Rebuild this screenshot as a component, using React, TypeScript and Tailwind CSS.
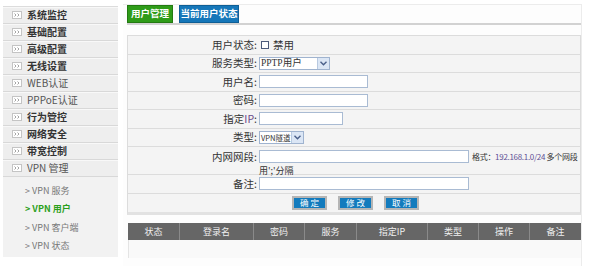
import React from "react";

const menu = [
  { t: "系统监控" },
  { t: "基础配置" },
  { t: "高级配置" },
  { t: "无线设置" },
  { t: "WEB认证", latin: true },
  { t: "PPPoE认证", latin: true },
  { t: "行为管控" },
  { t: "网络安全" },
  { t: "带宽控制" },
  { t: "VPN 管理", latin: true },
];

const sub = [
  { t: "VPN 服务" },
  { t: "VPN 用户", active: true },
  { t: "VPN 客户端" },
  { t: "VPN 状态" },
];

const cols = [
  { t: "状态", w: "w-[51px]" },
  { t: "登录名", w: "w-[74px]" },
  { t: "密码", w: "w-[51px]" },
  { t: "服务", w: "w-[52px]" },
  { t: "指定IP", w: "w-[71px]" },
  { t: "类型", w: "w-[51px]" },
  { t: "操作", w: "w-[51px]" },
  { t: "备注", w: "flex-1" },
];

function Arrow() {
  return (
    <span className="w-[12px] h-full shrink-0 bg-[#dbe6f5] border-l border-[#b8c9e0] flex items-center justify-center">
      <svg width="7" height="5" viewBox="0 0 7 5">
        <path d="M0.5 0.8 L3.5 3.8 L6.5 0.8" stroke="#4a5f8a" strokeWidth="1.4" fill="none" />
      </svg>
    </span>
  );
}

function Icon() {
  return (
    <span className="ml-[9px] w-[10px] h-[8px] shrink-0 border border-[#c4c4c4] bg-white flex items-center justify-center">
      <svg width="6" height="4" viewBox="0 0 6 4">
        <path d="M0.5 0.5 L2 2 L0.5 3.5 M3.5 0.5 L5 2 L3.5 3.5" stroke="#9a9a9a" strokeWidth="0.9" fill="none" />
      </svg>
    </span>
  );
}

function Row({ label, children }: { label: React.ReactNode; children?: React.ReactNode }) {
  return (
    <div className="flex items-center border-b border-[#dcdcdc] h-[18.5px]">
      <div className="w-[129px] shrink-0 text-right text-[10.5px] text-[#333] leading-none whitespace-nowrap">{label}</div>
      <div className="pl-[2px] flex items-center flex-1">{children}</div>
    </div>
  );
}

const inputCls = "shrink-0 h-[13px] border border-[#a9bbd3] bg-white outline-none";

export default function App() {
  return (
    <div
      className="w-[591px] h-[266px] bg-white flex overflow-hidden"
      style={{ fontFamily: '"Noto Sans CJK SC", "Noto Sans", sans-serif' }}
    >
      {/* Sidebar */}
      <div className="w-[115px] shrink-0 ml-[3px] mt-[6px] flex flex-col">
        <div className="bg-[#eeeeee] border-t border-[#dcdcdc]">
          {menu.map((m) => (
            <div key={m.t} className="h-[17px] flex items-center border-b border-[#d8d8d8] shadow-[inset_0_1px_0_#f8f8f8]">
              <Icon />
              <span
                className={`ml-[5px] text-[10px] leading-none whitespace-nowrap ${m.latin ? "text-[#555]" : "text-[#333] font-bold"}`}
              >
                {m.t}
              </span>
            </div>
          ))}
        </div>
        <div className="bg-[#f2f2f2] h-[80px] pt-[4px]">
          {sub.map((s) => (
            <div key={s.t} className="h-[18.5px] flex items-center pl-[22px]">
              <span
                className={`text-[9px] leading-none whitespace-nowrap ${s.active ? "text-[#2ca01c] font-bold" : "text-[#777]"}`}
              >
                &gt; {s.t}
              </span>
            </div>
          ))}
        </div>
      </div>

      {/* Main */}
      <div className="ml-[5px] w-[459px] shrink-0 mt-[4px] border-t border-r border-[#ececec] bg-[#fdfdfd] pl-[4px] flex flex-col">
        <div className="flex items-end h-[18px] gap-[6px]">
          <div className="h-[18px] w-[46px] bg-[#2f9c19] border border-[#237a12] flex items-center justify-center text-white text-[9.5px] font-bold leading-none whitespace-nowrap">
            用户管理
          </div>
          <div className="h-[18px] w-[60px] bg-[#1677b9] border border-[#0f5f96] flex items-center justify-center text-white text-[9.5px] font-bold leading-none whitespace-nowrap">
            当前用户状态
          </div>
        </div>
        <div className="h-[2px] bg-[#d2d2d2]" />

        {/* Form */}
        <div className="mt-[10px] border border-[#dcdcdc] border-b-[3px] border-b-[#e2e2e2] bg-[#f4f4f4]">
          <Row label="用户状态:">
            <span className="ml-[2px] w-[8px] h-[8px] border border-[#4c5a7a] bg-white" />
            <span className="ml-[4px] text-[10.5px] text-[#333] leading-none">禁用</span>
          </Row>
          <Row label="服务类型:">
            <div className="w-[71px] h-[13px] shrink-0 border border-[#9fb3cf] bg-white flex items-center justify-between">
              <span className="pl-[1px] text-[9.5px] leading-none text-[#333] whitespace-nowrap" style={{ fontFamily: '"Liberation Serif", "Noto Sans CJK SC", serif' }}>
                PPTP用户
              </span>
              <Arrow />
            </div>
          </Row>
          <Row label="用户名:">
            <input className={`w-[109px] ${inputCls}`} />
          </Row>
          <Row label="密码:">
            <input className={`w-[109px] ${inputCls}`} />
          </Row>
          <Row
            label={
              <>
                指定<span className="text-[#6a4a8a]">IP</span>:
              </>
            }
          >
            <input className={`w-[84px] ${inputCls}`} />
          </Row>
          <Row label="类型:">
            <div className="w-[45px] h-[13px] shrink-0 border border-[#9fb3cf] bg-white flex items-center justify-between overflow-hidden">
              <span className="pl-[1px] text-[7.5px] leading-none text-[#333] whitespace-nowrap">VPN隧道</span>
              <Arrow />
            </div>
          </Row>
          <div className="flex border-b border-[#dcdcdc] h-[28px]">
            <div className="w-[129px] shrink-0 text-right text-[10.5px] text-[#333] leading-none pt-[5px] whitespace-nowrap">内网网段:</div>
            <div className="pl-[2px] pt-[3px] flex flex-col flex-1">
              <div className="flex items-center">
                <input className={`w-[210px] ${inputCls}`} />
                <span className="ml-[3px] text-[8px] tracking-[-0.3px] leading-none text-[#333] whitespace-nowrap">
                  格式：<span className="text-[#5f4f95]">192.168.1.0/24</span> 多个网段
                </span>
              </div>
              <span className="mt-[3px] text-[9px] leading-none text-[#333] whitespace-nowrap">用';'分隔</span>
            </div>
          </div>
          <Row label="备注:">
            <input className={`w-[210px] ${inputCls}`} />
          </Row>
          <div className="h-[18px] flex items-center pl-[164px] gap-[11px]">
            {["确 定", "修 改", "取 消"].map((b) => (
              <div
                key={b}
                className="w-[35px] h-[14px] bg-[#137bbd] border-2 border-[#b5b5b5] flex items-center justify-center text-white text-[8.5px] leading-none whitespace-nowrap"
              >
                {b}
              </div>
            ))}
          </div>
        </div>

        {/* Data table */}
        <div className="mt-[8px] ml-[1px] flex flex-col">
          <div className="flex h-[17px] bg-[#666666]">
            {cols.map((c, i) => (
              <div
                key={c.t}
                className={`${c.w} flex items-center justify-center text-[9px] text-[#f0f0f0] leading-none whitespace-nowrap ${i > 0 ? "border-l border-[#8a8a8a]" : ""}`}
              >
                {c.t}
              </div>
            ))}
          </div>
          <div className="h-[18px] bg-[#f9f9f9] border-l border-[#e4e4e4]" />
        </div>
      </div>
    </div>
  );
}
